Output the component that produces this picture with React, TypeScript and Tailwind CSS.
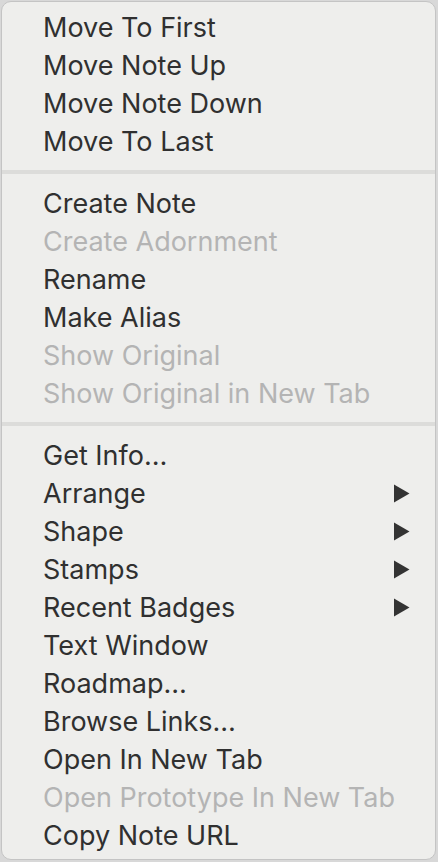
import React from "react";

type Item = { label: string; disabled?: boolean; sub?: boolean };

const sections: Item[][] = [
  [
    { label: "Move To First" },
    { label: "Move Note Up" },
    { label: "Move Note Down" },
    { label: "Move To Last" },
  ],
  [
    { label: "Create Note" },
    { label: "Create Adornment", disabled: true },
    { label: "Rename" },
    { label: "Make Alias" },
    { label: "Show Original", disabled: true },
    { label: "Show Original in New Tab", disabled: true },
  ],
  [
    { label: "Get Info…" },
    { label: "Arrange", sub: true },
    { label: "Shape", sub: true },
    { label: "Stamps", sub: true },
    { label: "Recent Badges", sub: true },
    { label: "Text Window" },
    { label: "Roadmap…" },
    { label: "Browse Links…" },
    { label: "Open In New Tab" },
    { label: "Open Prototype In New Tab", disabled: true },
    { label: "Copy Note URL" },
  ],
];

function Row({ item }: { item: Item }) {
  return (
    <div
      className={
        "flex h-[38px] items-center justify-between pl-[41px] pr-[25px] text-[27px] leading-none " +
        (item.disabled ? "text-[#b4b4b4]" : "text-[#303030]")
      }
    >
      <span>{item.label}</span>
      {item.sub && (
        <svg width="17" height="19" viewBox="0 0 17 19">
          <path d="M1 0.5 L16.5 9.5 L1 18.5 Z" fill="#333333" />
        </svg>
      )}
    </div>
  );
}

export default function App() {
  return (
    <div
      className="h-[862px] w-[438px] bg-[#d8d8d8] p-[1px]"
      style={{ fontFamily: "Inter, 'Noto Sans', sans-serif" }}
    >
      <div className="flex h-[859px] w-[435px] flex-col rounded-[10px] border border-[#c4c4c4] bg-[#eeeeec] pb-[4px] pt-[6px]">
        {sections.map((sec, i) => (
          <React.Fragment key={i}>
            {i > 0 && (
              <div className="flex h-[24px] items-center">
                <div className="h-[4px] w-full bg-[#dcdcda]" />
              </div>
            )}
            {sec.map((it) => (
              <Row key={it.label} item={it} />
            ))}
          </React.Fragment>
        ))}
      </div>
    </div>
  );
}
